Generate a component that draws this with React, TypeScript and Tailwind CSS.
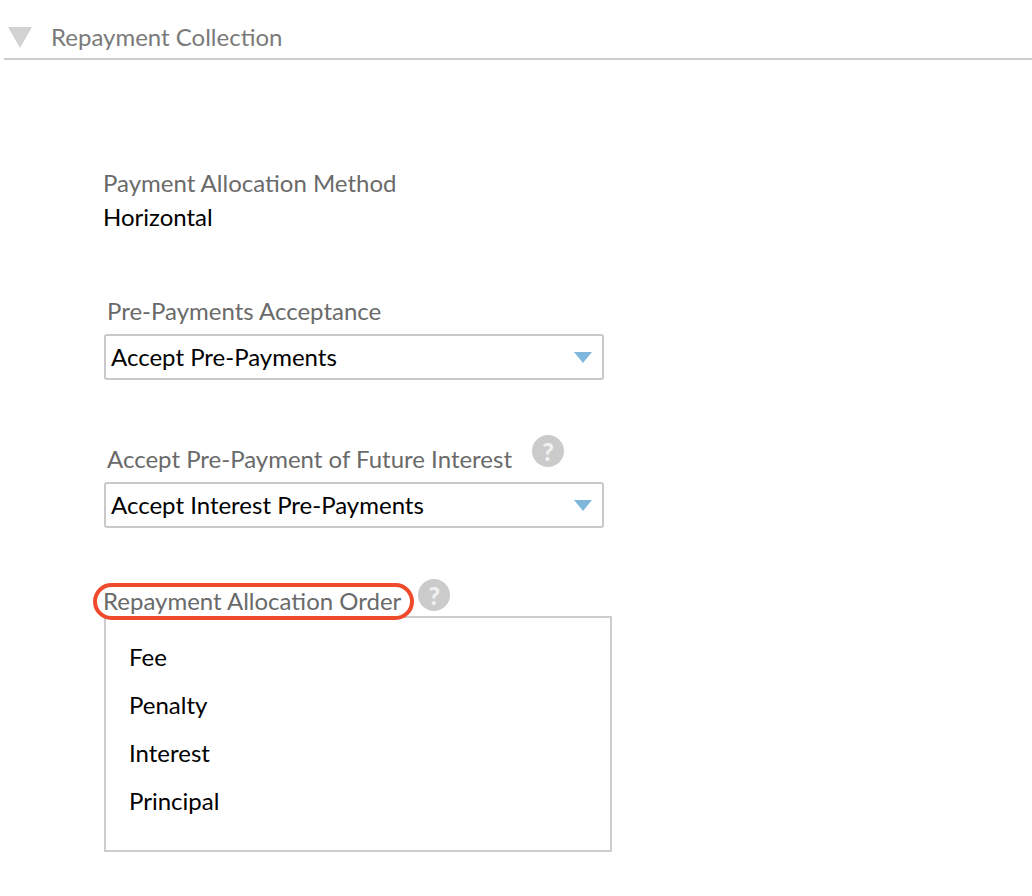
/** Repayment Collection settings section. */
const FONT = "font-['Lato',sans-serif]";

function HelpIcon() {
  return (
    <span className="flex h-8 w-8 items-center justify-center rounded-full bg-[#cbcbcb] text-[25px] leading-none font-black text-[#f1f1f1]">
      ?
    </span>
  );
}

function SelectBox({ value }: { value: string }) {
  return (
    <div className="flex h-[46px] w-[500px] items-center justify-between rounded-[3px] border-2 border-[#c9c9c9] pr-[10px] pl-[5px] text-[24px] text-black">
      <span>{value}</span>
      <svg width="18" height="11" viewBox="0 0 18 11">
        <path d="M0 0H18L9 11Z" fill="#7fb6dc" />
      </svg>
    </div>
  );
}

export default function App() {
  return (
    <div className={`${FONT} h-[896px] w-[1032px] overflow-hidden bg-white`}>
      {/* Section header */}
      <div className="ml-1 flex h-[60px] items-center border-b-2 border-[#cccccc] pt-[16px]">
        <svg className="ml-[3px]" width="26" height="23" viewBox="0 0 26 23">
          <path d="M1 1H25L13 22Z" fill="#d2d2d2" />
        </svg>
        <span className="ml-[18px] text-[24px] text-[#7a7a7a]">Repayment Collection</span>
      </div>

      <div className="pl-[104px]">
        <div className="mt-[106px] -ml-px text-[24px] leading-[34px] text-[#6a6a6a]">Payment Allocation Method</div>
        <div className="-ml-px text-[24px] leading-[34px] text-black">Horizontal</div>

        <div className="mt-[60px] pl-[3px] text-[24px] leading-[34px] text-[#6a6a6a]">Pre-Payments Acceptance</div>
        <div className="mt-[6px]">
          <SelectBox value="Accept Pre-Payments" />
        </div>

        <div className="mt-[52px] flex h-[44px] items-end pl-[3px]">
          <span className="text-[24px] leading-[34px] text-[#6a6a6a]">Accept Pre-Payment of Future Interest</span>
          <span className="mb-[9px] ml-[20px]">
            <HelpIcon />
          </span>
        </div>
        <div className="mt-[6px]">
          <SelectBox value="Accept Interest Pre-Payments" />
        </div>

        <div className="mt-[50px] flex h-[40px] items-end">
          <span className="relative -ml-px text-[24px] leading-[34px] text-[#6a6a6a]">
            Repayment Allocation Order
            <span className="absolute -top-[1px] -right-[13px] -bottom-[2px] -left-[10px] rounded-[20px] border-4 border-[#ef4a2b]" />
          </span>
          <span className="mb-[7px] ml-[17px]">
            <HelpIcon />
          </span>
        </div>

        <div className="-mt-[2px] h-[236px] w-[508px] border-2 border-[#cccccc] pt-[15px] pl-[23px] text-[24px] leading-[48px] text-black">
          <div>Fee</div>
          <div>Penalty</div>
          <div>Interest</div>
          <div>Principal</div>
        </div>
      </div>
    </div>
  );
}
